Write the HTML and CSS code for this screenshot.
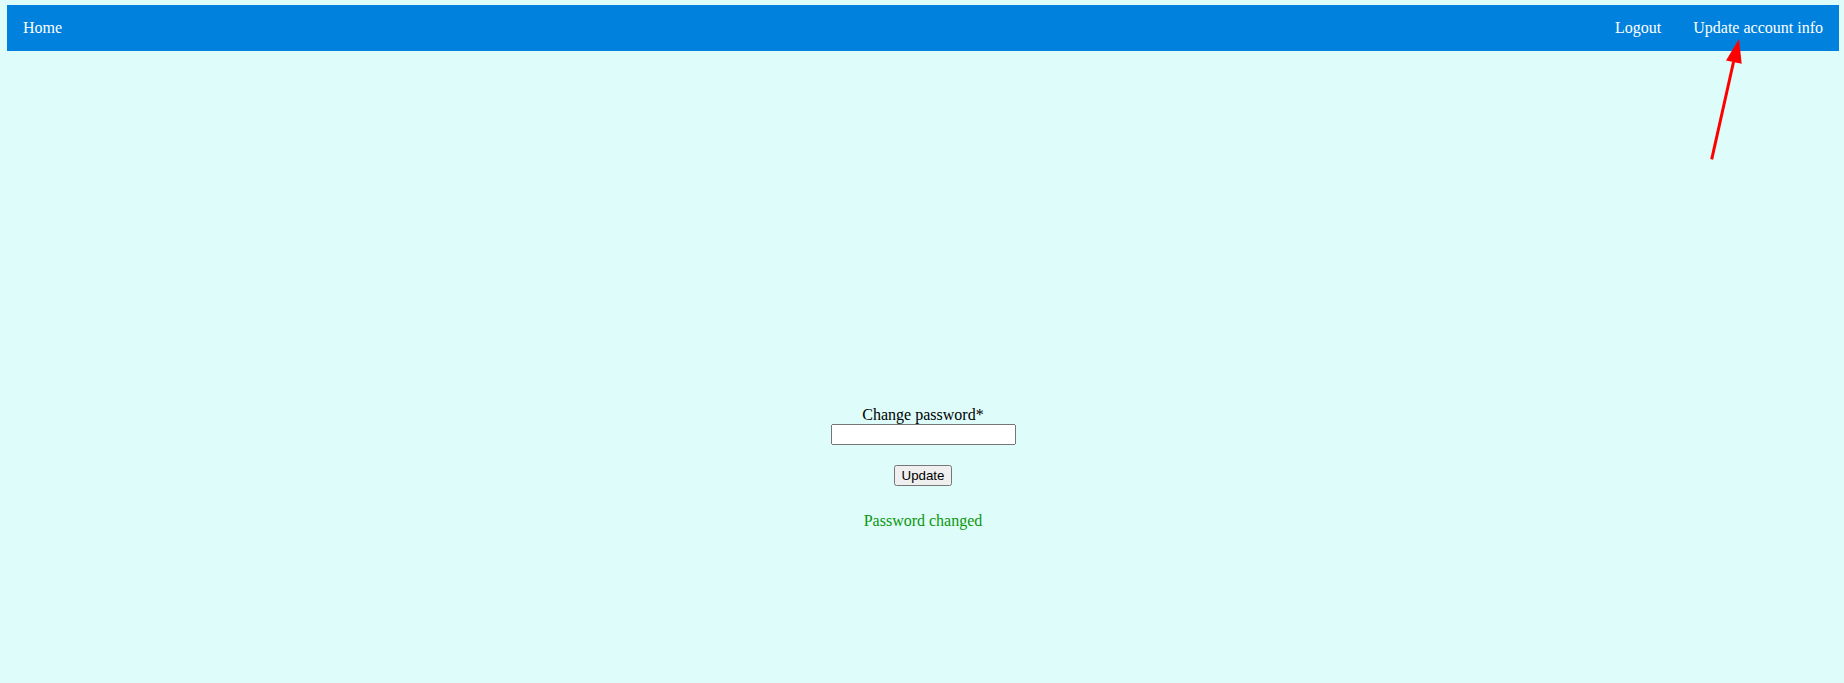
FILE: index.html
```html
<!DOCTYPE html>
<html lang="en">
<head>
  <meta charset="utf-8">
  <title>Update account info</title>
  <link rel="stylesheet" href="styles.css">
</head>
<body>
  <nav class="navbar">
    <a class="nav-link nav-home" href="#">Home</a>
    <a class="nav-link" href="#">Logout</a>
    <a class="nav-link" href="#">Update account info</a>
  </nav>
  <svg class="arrow" width="40" height="124" viewBox="0 0 40 124" aria-hidden="true">
    <path d="M27.5 24 L5.7 121.4" stroke="#f00" stroke-width="3" fill="none"/>
    <path d="M33 1 L20 22.6 L35.7 25.8 Z" fill="#f00"/>
  </svg>
  <main class="content">
    <form class="account-form">
      <label for="password">Change password*</label>
      <input class="password" type="password" id="password" name="password">
      <button class="submit" type="button">Update</button>
    </form>
    <p class="message">Password changed</p>
  </main>
</body>
</html>
```
FILE: styles.css
```css
body {
  margin: 5px 5px 0 7px;
  background: #ddfcfa;
  font: 16px/18px "Liberation Serif", "Times New Roman", serif;
  color: #000;
}

.navbar {
  display: flex;
  background: #0081dd;
}

.nav-link {
  padding: 14px 16px;
  color: #fff;
  text-decoration: none;
}

.nav-home {
  margin-right: auto;
}

.arrow {
  position: absolute;
  top: 38px;
  right: 98px;
}

.content {
  display: flex;
  flex-direction: column;
  align-items: center;
  padding-top: 355px;
}

.account-form {
  display: flex;
  flex-direction: column;
  align-items: center;
}

.password {
  box-sizing: border-box;
  width: 185px;
  height: 21px;
}

.submit {
  height: 21px;
  margin-top: 20px;
  padding: 1px 6px;
  font-family: "Liberation Sans", Arial, sans-serif;
}

.message {
  margin: 26px 0 0;
  color: #0c960c;
}
```
